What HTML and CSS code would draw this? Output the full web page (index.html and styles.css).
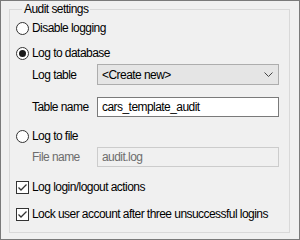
FILE: index.html
```html
<!DOCTYPE html>
<html>
<head>
<meta charset="utf-8">
<link rel="stylesheet" href="styles.css">
</head>
<body>
<div class="window">
  <fieldset class="group">
    <legend class="group-title">Audit settings</legend>
    <label class="row r1"><span class="radio"></span><span class="txt">Disable logging</span></label>
    <label class="row r2"><span class="radio on"><span class="dot"></span></span><span class="txt">Log to database</span></label>
    <div class="field f1"><span class="lbl">Log table</span>
      <div class="combo"><span>&lt;Create new&gt;</span>
        <svg class="chev" width="9" height="5" viewBox="0 0 9 5"><path d="M0.5 0.5 L4.5 4.5 L8.5 0.5" fill="none" stroke="#444" stroke-width="1"/></svg>
      </div>
    </div>
    <div class="field f2"><span class="lbl">Table name</span><div class="textbox">cars_template_audit</div></div>
    <label class="row r3"><span class="radio"></span><span class="txt">Log to file</span></label>
    <div class="field f3 disabled"><span class="lbl">File name</span><div class="textbox dis">audit.log</div></div>
    <label class="row r4"><span class="check"><svg width="11" height="11" viewBox="0 0 11 11"><path d="M1.5 5.5 L4 8 L9.5 2.5" fill="none" stroke="#333" stroke-width="1.3"/></svg></span><span class="txt">Log login/logout actions</span></label>
    <label class="row r5"><span class="check"><svg width="11" height="11" viewBox="0 0 11 11"><path d="M1.5 5.5 L4 8 L9.5 2.5" fill="none" stroke="#333" stroke-width="1.3"/></svg></span><span class="txt">Lock user account after three unsuccessful logins</span></label>
  </fieldset>
</div>
</body>
</html>
```
FILE: styles.css
```css
html, body {
  margin: 0;
  padding: 0;
}
body {
  font-family: "Liberation Sans", Arial, sans-serif;
  font-size: 12px;
  letter-spacing: -0.55px;
  color: #000;
  background: #f0f0f0;
}
.window {
  box-sizing: border-box;
  width: 300px;
  height: 240px;
  border: 1px solid #7a7a7a;
  padding: 0 8px 0 8px;
  background: #f0f0f0;
}
.group {
  box-sizing: border-box;
  width: 281px;
  margin: 0;
  padding: 1px 0 8px 6px;
  border: 1px solid #d9d9d9;
  min-inline-size: 0;
}
.group-title {
  padding: 0 2px;
  margin-left: 6px;
  line-height: 16px;
  height: 16px;
}
.row {
  display: flex;
  align-items: center;
  height: 20px;
  white-space: nowrap;
}
.r1 { margin-top: 0; }
.r2 { margin-top: 5px; }
.r3 { margin-top: 9px; }
.r4 { margin-top: 10px; }
.r5 { margin-top: 7px; }
.txt { margin-left: 3px; }
.radio {
  box-sizing: border-box;
  width: 13px;
  height: 13px;
  border: 1px solid #333;
  border-radius: 50%;
  background: #fff;
  display: flex;
  align-items: center;
  justify-content: center;
  flex: none;
}
.dot {
  width: 7px;
  height: 7px;
  border-radius: 50%;
  background: #1a1a1a;
}
.check {
  box-sizing: border-box;
  width: 13px;
  height: 13px;
  border: 1px solid #333;
  background: #fff;
  display: flex;
  align-items: center;
  justify-content: center;
  flex: none;
}
.check svg { display: block; }
.field {
  display: flex;
  align-items: center;
  padding-left: 16px;
  white-space: nowrap;
}
.f1 { margin-top: 1px; height: 21px; }
.f2 { margin-top: 12px; height: 20px; }
.f3 { margin-top: 1px; height: 20px; }
.lbl {
  width: 65px;
  flex: none;
}
.combo {
  box-sizing: border-box;
  width: 182px;
  height: 21px;
  border: 1px solid #adadad;
  background: #e5e5e5;
  display: flex;
  align-items: center;
  justify-content: space-between;
  padding: 0 5px 0 4px;
}
.chev { display: block; }
.textbox {
  box-sizing: border-box;
  width: 182px;
  height: 20px;
  border: 1px solid #7a7a7a;
  background: #fff;
  padding: 0 4px;
  line-height: 18px;
}
.disabled .lbl { color: #6d6d6d; }
.textbox.dis {
  border-color: #cccccc;
  background: #f0f0f0;
  color: #6d6d6d;
}
```
